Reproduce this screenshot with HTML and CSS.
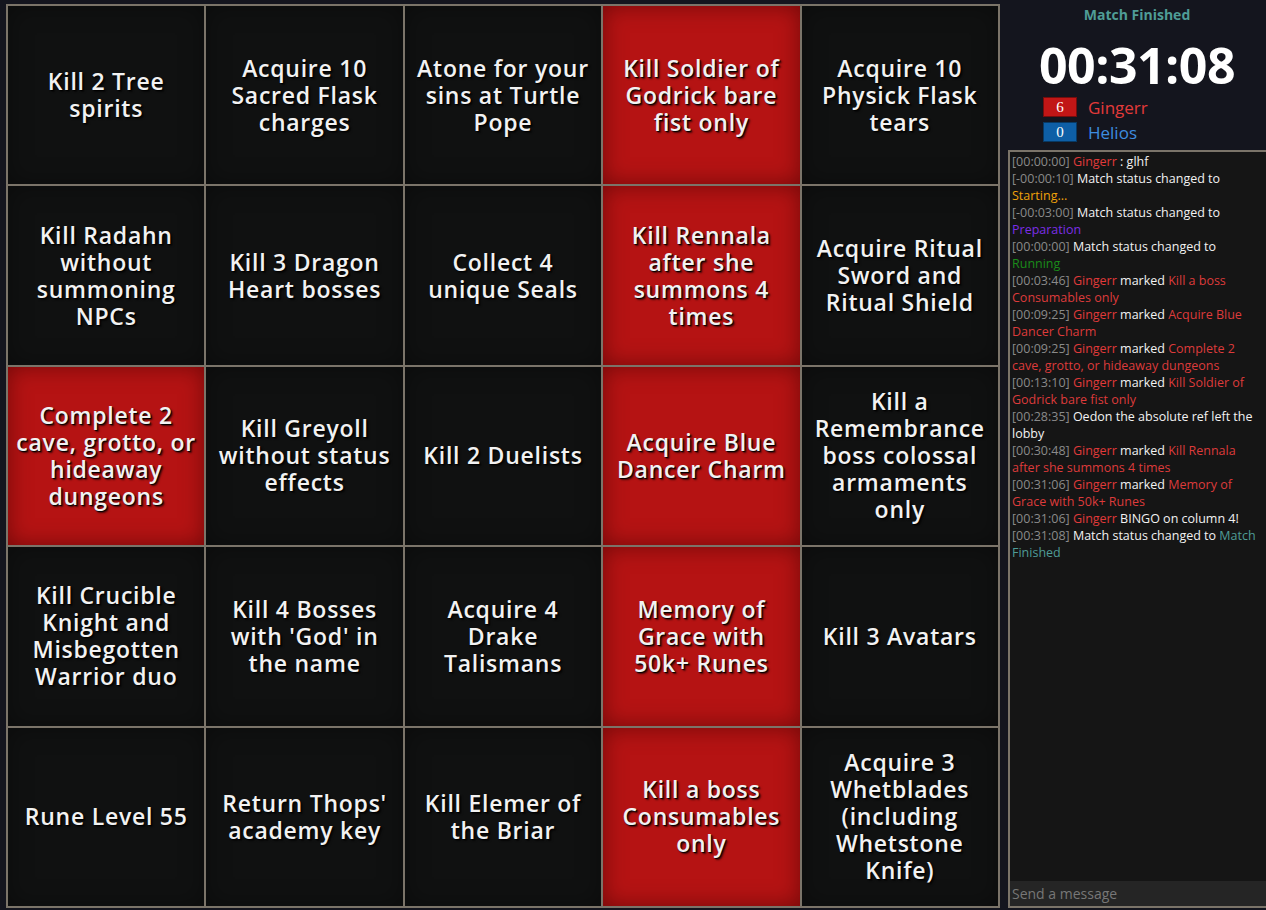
FILE: index.html
```html
<!DOCTYPE html>
<html>
<head>
<meta charset="utf-8">
<link rel="stylesheet" href="styles.css">
</head>
<body>
<div class="page">
  <div class="board">
    <div class="cell"><span>Kill 2 Tree spirits</span></div>
    <div class="cell"><span>Acquire 10 Sacred Flask charges</span></div>
    <div class="cell"><span>Atone for your sins at Turtle Pope</span></div>
    <div class="cell marked"><span>Kill Soldier of Godrick bare fist only</span></div>
    <div class="cell"><span>Acquire 10 Physick Flask tears</span></div>

    <div class="cell"><span>Kill Radahn without summoning NPCs</span></div>
    <div class="cell"><span>Kill 3 Dragon Heart bosses</span></div>
    <div class="cell"><span>Collect 4 unique Seals</span></div>
    <div class="cell marked"><span>Kill Rennala after she summons 4 times</span></div>
    <div class="cell"><span>Acquire Ritual Sword and Ritual Shield</span></div>

    <div class="cell marked"><span>Complete 2 cave, grotto, or hideaway dungeons</span></div>
    <div class="cell"><span>Kill Greyoll without status effects</span></div>
    <div class="cell"><span>Kill 2 Duelists</span></div>
    <div class="cell marked"><span>Acquire Blue Dancer Charm</span></div>
    <div class="cell"><span>Kill a Remembrance boss colossal armaments only</span></div>

    <div class="cell"><span>Kill Crucible Knight and Misbegotten Warrior duo</span></div>
    <div class="cell"><span>Kill 4 Bosses with 'God' in the name</span></div>
    <div class="cell"><span>Acquire 4 Drake Talismans</span></div>
    <div class="cell marked"><span>Memory of Grace with 50k+ Runes</span></div>
    <div class="cell"><span>Kill 3 Avatars</span></div>

    <div class="cell"><span>Rune Level 55</span></div>
    <div class="cell"><span>Return Thops' academy key</span></div>
    <div class="cell"><span>Kill Elemer of the Briar</span></div>
    <div class="cell marked"><span>Kill a boss Consumables only</span></div>
    <div class="cell"><span>Acquire 3 Whetblades (including Whetstone Knife)</span></div>
  </div>

  <aside class="side">
    <div class="status">Match Finished</div>
    <div class="timer">00:31:08</div>
    <div class="scores">
      <div class="score-row"><span class="score red">6</span><span class="pname red-t">Gingerr</span></div>
      <div class="score-row"><span class="score blue">0</span><span class="pname blue-t">Helios</span></div>
    </div>
    <div class="chat">
      <div class="log">
        <div class="msg"><span class="ts">[00:00:00]</span> <span class="pl">Gingerr</span> : glhf</div>
        <div class="msg"><span class="ts">[-00:00:10]</span> Match status changed to <span class="st-start">Starting...</span></div>
        <div class="msg"><span class="ts">[-00:03:00]</span> Match status changed to <span class="st-prep">Preparation</span></div>
        <div class="msg"><span class="ts">[00:00:00]</span> Match status changed to <span class="st-run">Running</span></div>
        <div class="msg"><span class="ts">[00:03:46]</span> <span class="pl">Gingerr</span> marked <span class="goal">Kill a boss Consumables only</span></div>
        <div class="msg"><span class="ts">[00:09:25]</span> <span class="pl">Gingerr</span> marked <span class="goal">Acquire Blue Dancer Charm</span></div>
        <div class="msg"><span class="ts">[00:09:25]</span> <span class="pl">Gingerr</span> marked <span class="goal">Complete 2 cave, grotto, or hideaway dungeons</span></div>
        <div class="msg"><span class="ts">[00:13:10]</span> <span class="pl">Gingerr</span> marked <span class="goal">Kill Soldier of Godrick bare fist only</span></div>
        <div class="msg"><span class="ts">[00:28:35]</span> Oedon the absolute ref left the lobby</div>
        <div class="msg"><span class="ts">[00:30:48]</span> <span class="pl">Gingerr</span> marked <span class="goal">Kill Rennala after she summons 4 times</span></div>
        <div class="msg"><span class="ts">[00:31:06]</span> <span class="pl">Gingerr</span> marked <span class="goal">Memory of Grace with 50k+ Runes</span></div>
        <div class="msg"><span class="ts">[00:31:06]</span> <span class="pl">Gingerr</span> BINGO on column 4!</div>
        <div class="msg"><span class="ts">[00:31:08]</span> Match status changed to <span class="st-fin">Match Finished</span></div>
      </div>
      <div class="input">Send a message</div>
    </div>
  </aside>
</div>
</body>
</html>
```

FILE: styles.css
```css
html, body {
  margin: 0;
  padding: 0;
  background: #14151e;
  height: 100%;
}
body {
  font-family: "Open Sans", "Noto Sans", sans-serif;
  color: #f0f0f0;
}
.page {
  display: flex;
  height: 910px;
  padding: 4px 0 2px 6px;
  box-sizing: border-box;
  gap: 8px;
}
.board {
  width: 994px;
  height: 904px;
  flex: none;
  box-sizing: border-box;
  display: grid;
  grid-template-columns: repeat(5, 1fr);
  grid-template-rows: repeat(5, 1fr);
  gap: 2px;
  padding: 2px;
  background: #7b7469;
}
.cell {
  background: #101111;
  box-shadow: inset 0 0 24px rgba(0, 0, 0, 0.35);
  display: flex;
  align-items: center;
  justify-content: center;
  text-align: center;
  padding: 0 5px;
  font-weight: 600;
  font-size: 23px;
  line-height: 27px;
  letter-spacing: 0.75px;
  color: #f2f2f2;
  text-shadow: 1px 1px 1px #000, 2px 2px 2px rgba(0,0,0,0.6);
}
.cell.marked {
  background: #b51313;
  box-shadow: inset 0 0 22px rgba(60, 0, 0, 0.55);
}
.side {
  flex: 1;
  display: flex;
  flex-direction: column;
  min-width: 0;
}
.status {
  text-align: center;
  color: #4f9c96;
  font-weight: 700;
  font-size: 14px;
  line-height: 18px;
  margin-top: 2px;
}
.timer {
  text-align: center;
  font-weight: 700;
  font-size: 50px;
  line-height: 56px;
  color: #ffffff;
  margin-top: 13px;
  letter-spacing: -0.5px;
}
.scores {
  display: flex;
  flex-direction: column;
  gap: 5px;
  padding-left: 35px;
  margin-top: 4px;
}
.score-row {
  display: flex;
  align-items: center;
  gap: 11px;
  height: 20px;
}
.score {
  width: 32px;
  height: 18px;
  line-height: 18px;
  text-align: center;
  font-size: 15px;
  font-family: "Liberation Serif", serif;
  color: #fff;
  border: 1px solid rgba(0,0,0,0.4);
}
.score.red { background: #c11616; }
.score.blue { background: #0e5fa6; }
.pname {
  font-size: 17px;
  font-weight: 400;
}
.red-t { color: #e33a3a; }
.blue-t { color: #3d8de0; }
.chat {
  margin-top: 8px;
  flex: 1;
  display: flex;
  flex-direction: column;
  border: 2px solid #7b7469;
  border-right: none;
  background: #151515;
  min-height: 0;
}
.log {
  flex: 1;
  padding: 1px 2px 0 2px;
  font-size: 12.5px;
  line-height: 17px;
  color: #f2f2f2;
}
.ts { color: #8a8a8a; }
.pl { color: #e03a3a; }
.goal { color: #dd3b3b; }
.st-start { color: #f0a20a; }
.st-prep { color: #7b2ee6; }
.st-run { color: #1a8c1a; }
.st-fin { color: #4f9c96; }
.input {
  height: 25px;
  line-height: 25px;
  background: #252525;
  color: #777;
  font-size: 14px;
  padding-left: 2px;
}
```
